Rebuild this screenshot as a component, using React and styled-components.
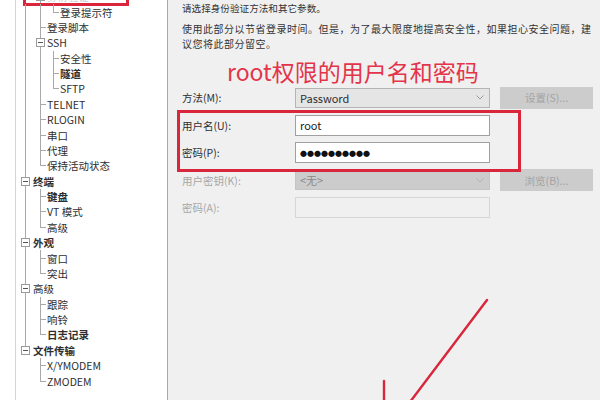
import React from 'react'
import styled, { createGlobalStyle } from 'styled-components'

const GlobalStyle = createGlobalStyle`
  html, body { margin: 0; padding: 0; }
  body {
    width: 600px;
    height: 400px;
    overflow: hidden;
    font-family: "Noto Sans CJK SC", "Noto Sans", sans-serif;
    color: #2b2b2b;
    background: #f0f0f0;
  }
`

const LINE = '#a9a9a9'
const RED = '#d9263a'
// x positions (page coords) of tree guide lines and label starts per level
const lineX = [25, 40, 53]
const textX = [33, 47, 60]
const ORIGIN = 16

const rows = [
  { t: '身份验证', l: 1, exp: true, mark: true },
  { t: '登录提示符', l: 2, last: true },
  { t: '登录脚本', l: 1 },
  { t: 'SSH', l: 1, exp: true },
  { t: '安全性', l: 2 },
  { t: '隧道', l: 2, b: true },
  { t: 'SFTP', l: 2, last: true },
  { t: 'TELNET', l: 1 },
  { t: 'RLOGIN', l: 1 },
  { t: '串口', l: 1 },
  { t: '代理', l: 1 },
  { t: '保持活动状态', l: 1, last: true },
  { t: '终端', l: 0, exp: true, b: true },
  { t: '键盘', l: 1, b: true },
  { t: 'VT 模式', l: 1 },
  { t: '高级', l: 1, last: true },
  { t: '外观', l: 0, exp: true, b: true },
  { t: '窗口', l: 1 },
  { t: '突出', l: 1, last: true },
  { t: '高级', l: 0, exp: true },
  { t: '跟踪', l: 1 },
  { t: '响铃', l: 1 },
  { t: '日志记录', l: 1, b: true, last: true },
  { t: '文件传输', l: 0, exp: true, b: true, last: true },
  { t: 'X/YMODEM', l: 1 },
  { t: 'ZMODEM', l: 1, last: true },
]

// build background guide layers for every row
const buildGuides = () => {
  const lastAt = [false, false, false]
  return rows.map((r) => {
    const layers = []
    for (let k = 0; k < r.l; k++) {
      if (!lastAt[k]) layers.push(`linear-gradient(${LINE},${LINE}) ${lineX[k] - ORIGIN}px 0 / 1px 100% no-repeat`)
    }
    layers.push(
      `linear-gradient(${LINE},${LINE}) ${lineX[r.l] - ORIGIN}px 0 / 1px ${r.last ? '50%' : '100%'} no-repeat`
    )
    if (!r.exp) {
      const w = textX[r.l] - lineX[r.l] - 1
      layers.push(`linear-gradient(${LINE},${LINE}) ${lineX[r.l] - ORIGIN}px 50% / ${w}px 1px no-repeat`)
    }
    lastAt[r.l] = !!r.last
    return layers.join(', ')
  })
}
const guides = buildGuides()

const Page = styled.div`
  position: relative;
  display: flex;
  width: 600px;
  height: 400px;
`

const Sidebar = styled.div`
  width: 168px;
  flex-shrink: 0;
  padding-left: 15px;
  box-sizing: border-box;
  background: #ffffff;
  display: flex;
`

const Tree = styled.div`
  flex: 1;
  border-left: 1px solid #d4d4d4;
  border-right: 1px solid #a8a8a8;
  background: #ffffff;
  margin-top: -11px;
`

const Row = styled.div`
  position: relative;
  height: 15.375px;
  display: flex;
  align-items: center;
  background: ${(p) => p.$guides};
`

const Gutter = styled.div`
  width: ${(p) => p.$w}px;
  flex-shrink: 0;
  display: flex;
  align-items: center;
  padding-left: ${(p) => p.$box}px;
  box-sizing: border-box;
`

const Expander = styled.span`
  position: relative;
  width: 9px;
  height: 9px;
  box-sizing: border-box;
  border: 1px solid #9a9a9a;
  background: #ffffff;
  &::after {
    content: '';
    position: absolute;
    left: 1px;
    right: 1px;
    top: 3px;
    height: 1px;
    background: #555;
  }
`

const Label = styled.span`
  font-size: 10.5px;
  line-height: 15px;
  white-space: nowrap;
  font-weight: ${(p) => (p.$bold ? 700 : 400)};
  color: ${(p) => (p.$faded ? '#d0d0d0' : '#2e2e2e')};
`

const Mark = styled.span`
  position: absolute;
  left: ${23 - ORIGIN}px;
  width: 106px;
  top: -2px;
  bottom: -2px;
  border: 3px solid ${RED};
  box-sizing: border-box;
  pointer-events: none;
`

const Main = styled.div`
  flex: 1;
  padding: 0 7px 0 14px;
  background: #f0f0f0;
`

const Intro = styled.p`
  margin: 1px 0 0;
  font-size: 9.6px;
  line-height: 14px;
  color: #333;
`

const Note = styled.p`
  margin: 6px 0 0;
  font-size: 10px;
  line-height: 15px;
  letter-spacing: 0.5px;
  color: #333;
  white-space: nowrap;
`

const Callout = styled.div`
  margin: 5px 0 0 45px;
  font-size: 23px;
  line-height: 30px;
  color: #e3344a;
  white-space: nowrap;
`

const Form = styled.div`
  position: relative;
  margin-top: 1px;
  display: grid;
  grid-template-columns: 103px 195px 93px;
  column-gap: 10px;
  row-gap: 6.5px;
  grid-auto-rows: 21px;
  align-items: center;
`

const FieldLabel = styled.div`
  font-size: 10.5px;
  color: ${(p) => (p.$disabled ? '#a6a6a6' : '#2e2e2e')};
  white-space: nowrap;
`

const Select = styled.div`
  height: 20px;
  box-sizing: border-box;
  display: flex;
  align-items: center;
  justify-content: space-between;
  padding: 0 5px 0 4px;
  border: 1px solid ${(p) => (p.$disabled ? '#c4c4c4' : '#b4b4b4')};
  background: ${(p) => (p.$disabled ? '#cccccc' : '#e5e5e5')};
  color: ${(p) => (p.$disabled ? '#8a8a8a' : '#2e2e2e')};
  font-size: 11px;
`

const Chevron = styled.svg`
  width: 8px;
  height: 5px;
`

const Input = styled.div`
  height: 21px;
  box-sizing: border-box;
  display: flex;
  align-items: center;
  padding: 0 4px;
  border: 1px solid ${(p) => (p.$disabled ? '#d6d6d6' : '#a0a0a0')};
  background: ${(p) => (p.$disabled ? '#f0f0f0' : '#ffffff')};
  font-size: 11px;
  color: #222;
`

const Dots = styled.span`
  font-size: 7px;
  letter-spacing: 0px;
  color: #111;
`

const Button = styled.div`
  height: 22px;
  display: flex;
  align-items: center;
  justify-content: center;
  background: #cccccc;
  color: #a3a3a3;
  font-size: 10.5px;
`

const Highlight = styled.div`
  position: absolute;
  left: -5px;
  top: 23px;
  width: 344px;
  height: 62px;
  border: 3px solid ${RED};
  box-sizing: border-box;
  pointer-events: none;
`

const Arrow = styled.svg`
  position: absolute;
  left: 0;
  top: 0;
  width: 600px;
  height: 400px;
  pointer-events: none;
`

const ChevronIcon = ({ color }) => (
  <Chevron viewBox="0 0 8 5">
    <path d="M0.5 0.5 L4 4 L7.5 0.5" fill="none" stroke={color} strokeWidth="1" />
  </Chevron>
)

export default function App() {
  return (
    <>
      <GlobalStyle />
      <Page>
        <Sidebar>
          <Tree>
            {rows.map((r, i) => (
              <Row key={i} $guides={guides[i]}>
                <Gutter $w={textX[r.l] - ORIGIN} $box={lineX[r.l] - ORIGIN - 4}>
                  {r.exp && <Expander />}
                </Gutter>
                <Label $bold={r.b} $faded={r.mark}>{r.t}</Label>
                {r.mark && <Mark />}
              </Row>
            ))}
          </Tree>
        </Sidebar>
        <Main>
          <Intro>请选择身份验证方法和其它参数。</Intro>
          <Note>
            使用此部分以节省登录时间。但是，为了最大限度地提高安全性，如果担心安全问题，建
            <br />
            议您将此部分留空。
          </Note>
          <Callout>root权限的用户名和密码</Callout>
          <Form>
            <FieldLabel>方法(M):</FieldLabel>
            <Select>
              Password
              <ChevronIcon color="#9a9a9a" />
            </Select>
            <Button>设置(S)...</Button>

            <FieldLabel>用户名(U):</FieldLabel>
            <Input>root</Input>
            <div />

            <FieldLabel>密码(P):</FieldLabel>
            <Input>
              <Dots>●●●●●●●●●●</Dots>
            </Input>
            <div />

            <FieldLabel $disabled>用户密钥(K):</FieldLabel>
            <Select $disabled>
              &lt;无&gt;
              <ChevronIcon color="#b0b0b0" />
            </Select>
            <Button>浏览(B)...</Button>

            <FieldLabel $disabled>密码(A):</FieldLabel>
            <Input $disabled />
            <div />

            <Highlight />
          </Form>
        </Main>
        <Arrow viewBox="0 0 600 400">
          <line x1="487" y1="300" x2="410" y2="402" stroke={RED} strokeWidth="2.4" strokeLinecap="round" />
          <line x1="384" y1="381" x2="384" y2="402" stroke={RED} strokeWidth="2.4" strokeLinecap="round" />
        </Arrow>
      </Page>
    </>
  )
}
